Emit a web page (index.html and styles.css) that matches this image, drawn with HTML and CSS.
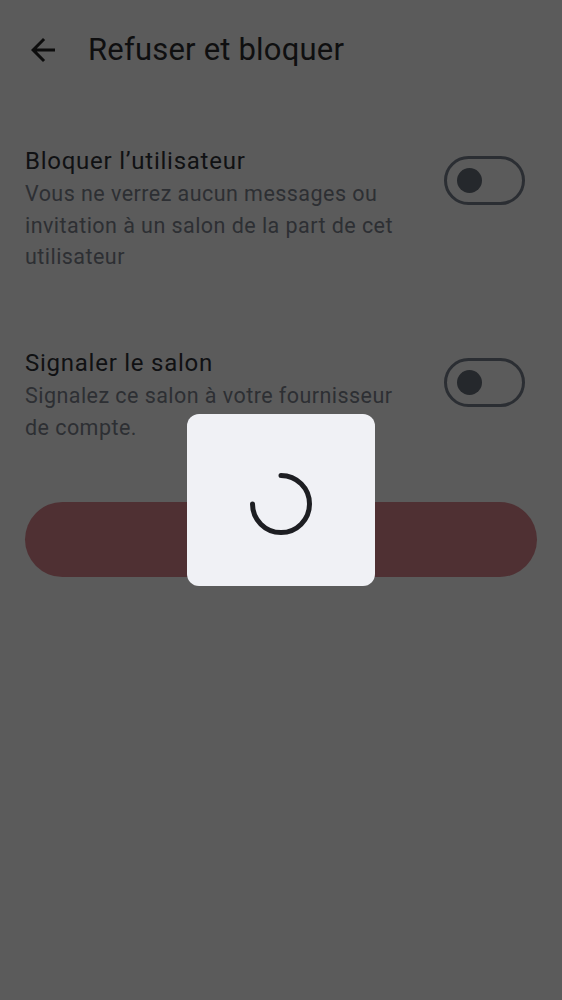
FILE: index.html
```html
<!DOCTYPE html>
<html lang="fr">
<head>
<meta charset="utf-8">
<title>Refuser et bloquer</title>
<link rel="stylesheet" href="styles.css">
</head>
<body>
<div class="screen">
  <header class="topbar">
    <svg class="back" viewBox="0 0 24 24" width="36" height="36" aria-hidden="true">
      <path d="M20 11H7.83l5.59-5.59L12 4l-8 8 8 8 1.41-1.41L7.83 13H20v-2z" fill="currentColor"/>
    </svg>
    <h1 class="title">Refuser et bloquer</h1>
  </header>

  <main class="content">
    <div class="row">
      <div class="row-text">
        <div class="row-title">Bloquer l’utilisateur</div>
        <div class="row-desc">Vous ne verrez aucun messages ou invitation à un salon de la part de cet utilisateur</div>
      </div>
      <div class="switch"><span class="thumb"></span></div>
    </div>

    <div class="row">
      <div class="row-text">
        <div class="row-title">Signaler le salon</div>
        <div class="row-desc">Signalez ce salon à votre fournisseur de compte.</div>
      </div>
      <div class="switch"><span class="thumb"></span></div>
    </div>

    <div class="btn">Refuser</div>
  </main>
</div>

<div class="overlay">
  <div class="dialog">
    <svg class="spinner" viewBox="0 0 64 64" width="64" height="64" aria-hidden="true">
      <path d="M32 3.5 A28.5 28.5 0 1 1 3.5 32" fill="none" stroke="currentColor" stroke-width="5" stroke-linecap="round"/>
    </svg>
  </div>
</div>
</body>
</html>
```

FILE: styles.css
```css
* { box-sizing: border-box; }
html, body { margin: 0; padding: 0; }
body {
  background: #5b5b5b;
  font-family: Roboto, "Noto Sans", sans-serif;
  width: 562px;
  height: 1000px;
  overflow: hidden;
}
.screen { padding: 0 25px; }
.topbar {
  height: 100px;
  display: flex;
  align-items: center;
  gap: 27px;
}
.back { color: #0d0d0d; flex: none; margin-top: -1px; }
.title {
  margin: 0;
  font-size: 31px;
  font-weight: 400;
  color: #0f0f10;
  line-height: 40px;
  letter-spacing: 0.2px;
}
.content { padding-top: 7px; }
.row {
  display: flex;
  align-items: flex-start;
  padding: 38px 0 36.5px;
}
.row-text { flex: 1; min-width: 0; }
.row-title {
  font-size: 24px;
  line-height: 32px;
  color: #101113;
  letter-spacing: 0.75px;
}
.row-desc {
  margin-top: 1px;
  font-size: 21.5px;
  line-height: 31.5px;
  color: #2d2f33;
  letter-spacing: 0.45px;
}
.switch {
  flex: none;
  width: 81px;
  height: 49px;
  margin: 11px 12px 0 28px;
  border: 3px solid #2b2e33;
  border-radius: 25px;
  display: flex;
  align-items: center;
  padding-left: 9.5px;
}
.thumb {
  width: 25px;
  height: 25px;
  border-radius: 50%;
  background: #25282c;
}
.btn {
  margin-top: 22.5px;
  height: 75px;
  border-radius: 38px;
  background: #4f3033;
  display: flex;
  align-items: center;
  justify-content: center;
  color: #5b4244;
  font-size: 21px;
}
.overlay {
  position: fixed;
  inset: 0;
  display: flex;
  align-items: center;
  justify-content: center;
}
.dialog {
  width: 188px;
  height: 172px;
  background: #f0f1f5;
  border-radius: 12px;
  display: flex;
  align-items: center;
  justify-content: center;
  padding-top: 8px;
}
.spinner { color: #1d1e22; }
```
